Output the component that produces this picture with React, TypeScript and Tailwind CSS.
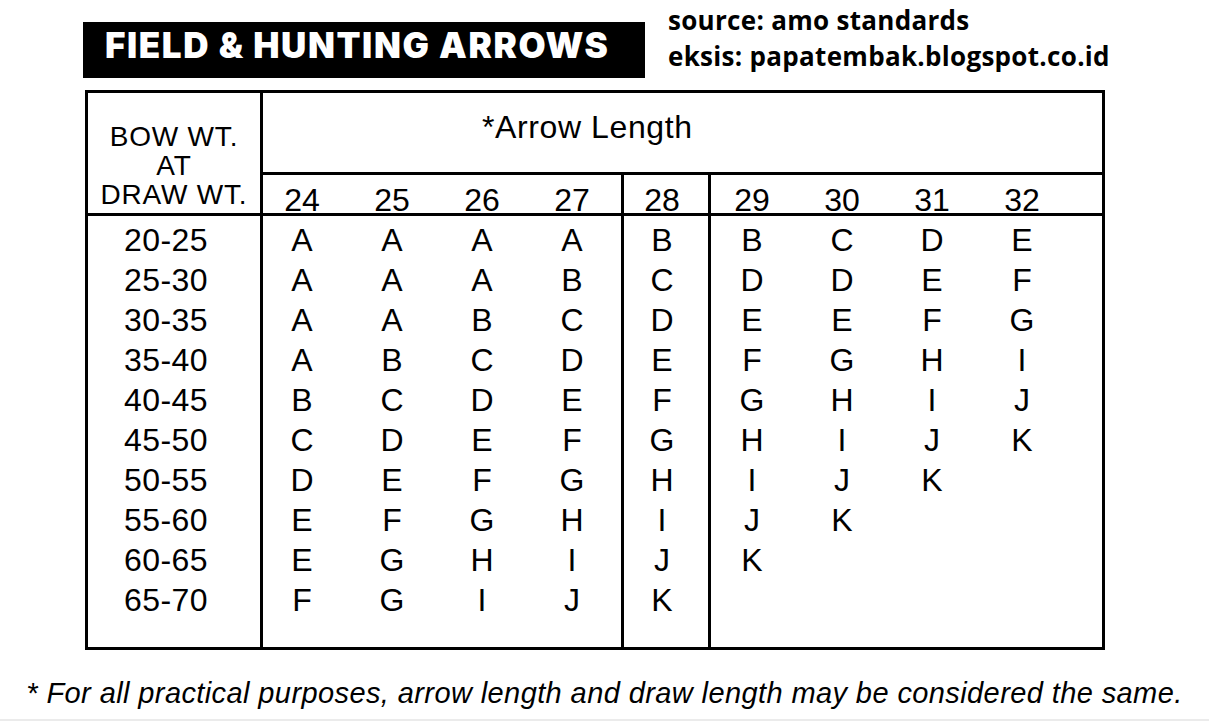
const rows: { w: string; a: string[]; b: string[]; c: string[] }[] = [
    { w: '20-25', a: ['A', 'A', 'A', 'A'], b: ['B'], c: ['B', 'C', 'D', 'E'] },
    { w: '25-30', a: ['A', 'A', 'A', 'B'], b: ['C'], c: ['D', 'D', 'E', 'F'] },
    { w: '30-35', a: ['A', 'A', 'B', 'C'], b: ['D'], c: ['E', 'E', 'F', 'G'] },
    { w: '35-40', a: ['A', 'B', 'C', 'D'], b: ['E'], c: ['F', 'G', 'H', 'I'] },
    { w: '40-45', a: ['B', 'C', 'D', 'E'], b: ['F'], c: ['G', 'H', 'I', 'J'] },
    { w: '45-50', a: ['C', 'D', 'E', 'F'], b: ['G'], c: ['H', 'I', 'J', 'K'] },
    { w: '50-55', a: ['D', 'E', 'F', 'G'], b: ['H'], c: ['I', 'J', 'K'] },
    { w: '55-60', a: ['E', 'F', 'G', 'H'], b: ['I'], c: ['J', 'K'] },
    { w: '60-65', a: ['E', 'G', 'H', 'I'], b: ['J'], c: ['K'] },
    { w: '65-70', a: ['F', 'G', 'I', 'J'], b: ['K'], c: [] },
];

const sans = "font-['Liberation_Sans',Arial,sans-serif]";

const Cells = ({ items, offset }: { items: string[]; offset: string }) => (
    <div className={`flex h-[40px] ${offset}`}>
        {items.map((x, i) => (
            <div key={i} className="w-[90px] shrink-0 text-center leading-[40px]">
                {x}
            </div>
        ))}
    </div>
);

const Group = ({ heads, col, offset, className }: { heads: string[]; col: 'a' | 'b' | 'c'; offset: string; className: string }) => (
    <div className={`flex flex-col ${className}`}>
        <div className="h-[41px] border-b-[3px] border-black">
            <div className={`flex pt-[9px] leading-none ${offset}`}>
                {heads.map((h) => (
                    <div key={h} className="w-[90px] shrink-0 text-center">
                        {h}
                    </div>
                ))}
            </div>
        </div>
        <div className="pt-[4px]">
            {rows.map((r) => (
                <Cells key={r.w} items={r[col]} offset={offset} />
            ))}
        </div>
    </div>
);

export default function App() {
    return (
        <div className={`w-[1209px] h-[721px] bg-white text-black flex flex-col ${sans}`}>
            {/* header */}
            <div className="flex items-start h-[90px]">
                <div className="ml-[83px] mt-[22px] w-[562px] h-[56px] bg-black text-white pl-[22px] pt-[6px]">
                    <span className="font-['Inter',sans-serif] font-black text-[35px] leading-[34px] tracking-[1.6px]">FIELD &amp; HUNTING ARROWS</span>
                </div>
                <div className="ml-[23px] mt-[2px] font-['Open_Sans',sans-serif] font-bold text-[26px] leading-[36px] tracking-[0.3px]">
                    <div>source: amo standards</div>
                    <div>eksis: papatembak.blogspot.co.id</div>
                </div>
            </div>

            {/* table */}
            <div className="ml-[85px] w-[1020px] h-[560px] border-[3px] border-black flex text-[32px]">
                <div className="w-[175px] shrink-0 border-r-[3px] border-black flex flex-col">
                    <div className="h-[123px] border-b-[3px] border-black pt-[29px] text-center text-[28px] leading-[29px] tracking-[0.8px]">
                        <div>BOW WT.</div>
                        <div>AT</div>
                        <div>DRAW WT.</div>
                    </div>
                    <div className="pt-[4px] pr-[16px] tracking-[0.4px]">
                        {rows.map((r) => (
                            <div key={r.w} className="h-[40px] leading-[40px] text-center">
                                {r.w}
                            </div>
                        ))}
                    </div>
                </div>
                <div className="flex-1 flex flex-col">
                    <div className="h-[82px] border-b-[3px] border-black pl-[219px] pt-[18px] text-[32px] leading-none tracking-[0.6px]">*Arrow Length</div>
                    <div className="flex flex-1">
                        <Group heads={['24', '25', '26', '27']} col="a" offset="-ml-[6px]" className="w-[361px] shrink-0 border-r-[3px] border-black" />
                        <Group heads={['28']} col="b" offset="-ml-[7px]" className="w-[87px] shrink-0 border-r-[3px] border-black" />
                        <Group heads={['29', '30', '31', '32']} col="c" offset="-ml-[4px]" className="flex-1" />
                    </div>
                </div>
            </div>

            {/* footnote */}
            <div className="mt-[27px] text-center italic text-[29px] leading-[32px] tracking-[0.4px]">
                * For all practical purposes, arrow length and draw length may be considered the same.
            </div>
            <div className="mt-auto h-[2px] bg-[#ebebeb]" />
        </div>
    );
}
